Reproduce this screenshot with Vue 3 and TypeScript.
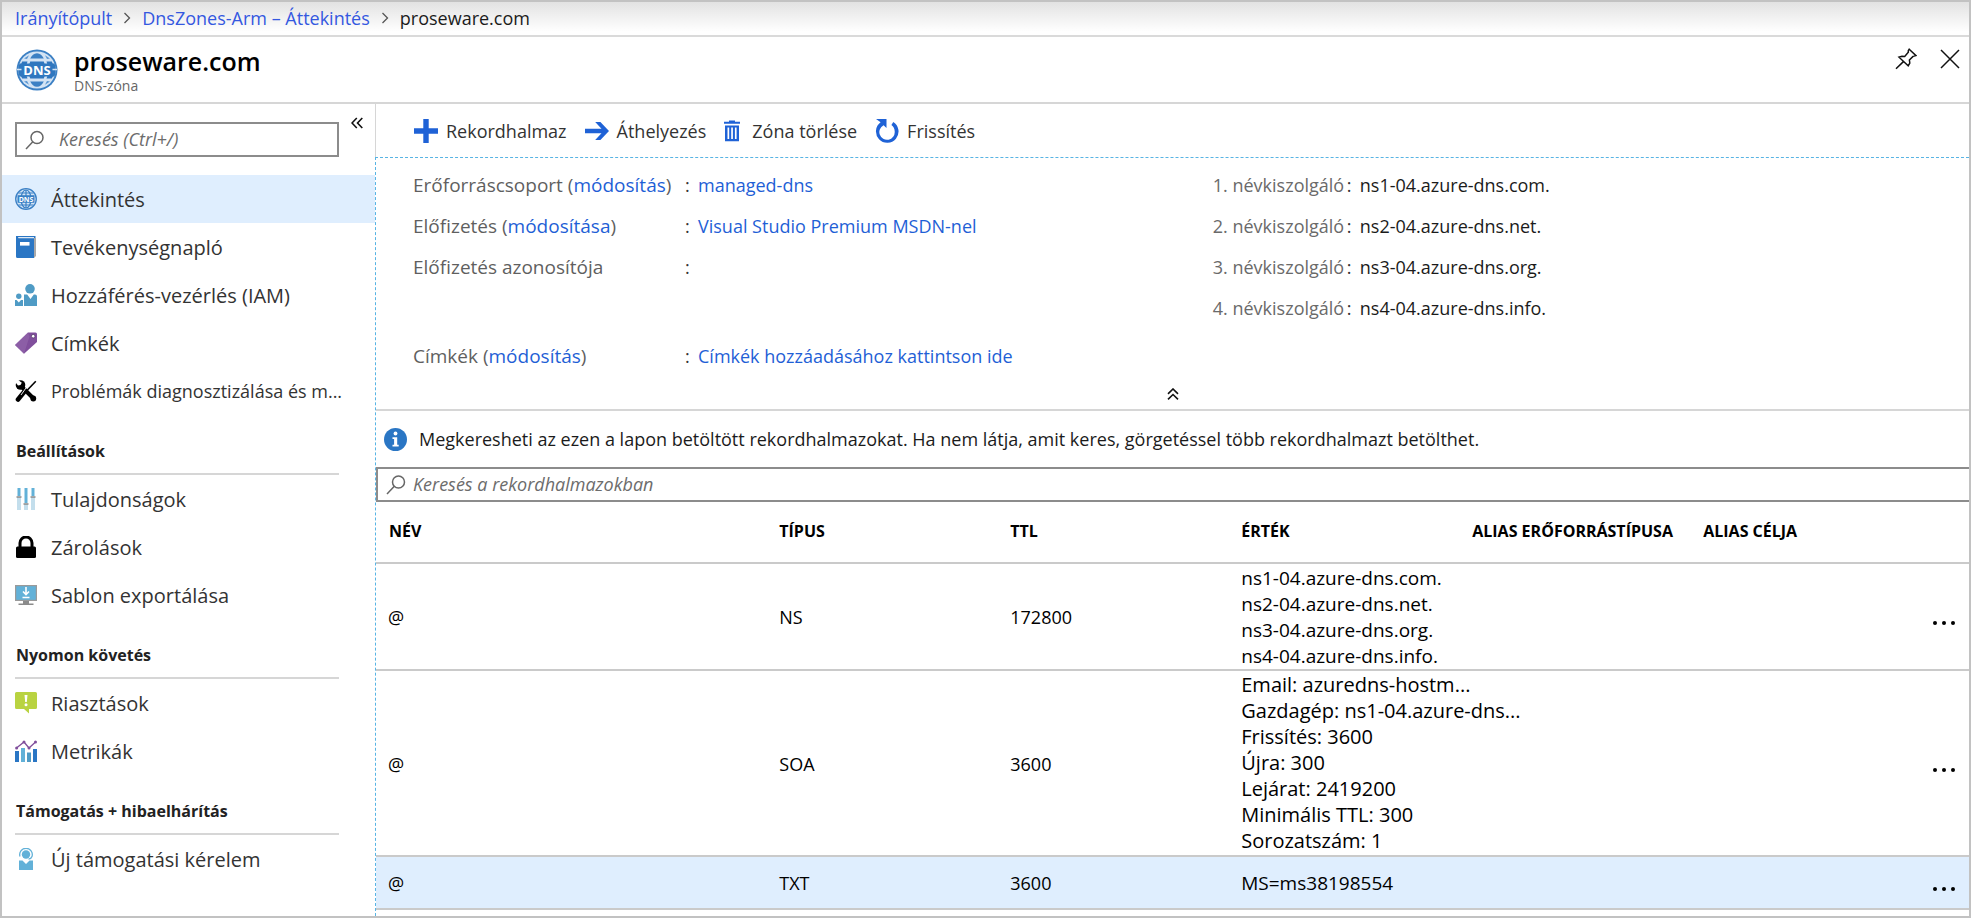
<script setup lang="ts">
import { ref } from 'vue'

interface MenuItem {
  label: string
  icon: string
  active?: boolean
  long?: boolean
}

interface MenuGroup {
  title?: string
  items: MenuItem[]
}

interface RecordSet {
  name: string
  type: string
  ttl: string
  values: string[]
  selected?: boolean
  detailed?: boolean
}

const menu: MenuGroup[] = [
  {
    items: [
      { label: 'Áttekintés', icon: 'dns', active: true },
      { label: 'Tevékenységnapló', icon: 'log' },
      { label: 'Hozzáférés-vezérlés (IAM)', icon: 'iam' },
      { label: 'Címkék', icon: 'tag' },
      { label: 'Problémák diagnosztizálása és m...', icon: 'tools', long: true },
    ],
  },
  {
    title: 'Beállítások',
    items: [
      { label: 'Tulajdonságok', icon: 'sliders' },
      { label: 'Zárolások', icon: 'lock' },
      { label: 'Sablon exportálása', icon: 'export' },
    ],
  },
  {
    title: 'Nyomon követés',
    items: [
      { label: 'Riasztások', icon: 'alert' },
      { label: 'Metrikák', icon: 'metrics' },
    ],
  },
  {
    title: 'Támogatás + hibaelhárítás',
    items: [{ label: 'Új támogatási kérelem', icon: 'support' }],
  },
]

const nameServers: string[] = [
  'ns1-04.azure-dns.com.',
  'ns2-04.azure-dns.net.',
  'ns3-04.azure-dns.org.',
  'ns4-04.azure-dns.info.',
]

const columns: string[] = ['NÉV', 'TÍPUS', 'TTL', 'ÉRTÉK', 'ALIAS ERŐFORRÁSTÍPUSA', 'ALIAS CÉLJA']

const records: RecordSet[] = [
  { name: '@', type: 'NS', ttl: '172800', values: nameServers },
  {
    name: '@',
    type: 'SOA',
    ttl: '3600',
    values: [
      'Email: azuredns-hostm...',
      'Gazdagép: ns1-04.azure-dns...',
      'Frissítés: 3600',
      'Újra: 300',
      'Lejárat: 2419200',
      'Minimális TTL: 300',
      'Sorozatszám: 1',
    ],
    detailed: true,
  },
  { name: '@', type: 'TXT', ttl: '3600', values: ['MS=ms38198554'], selected: true },
]

const menuFilter = ref('')
const recordFilter = ref('')
</script>

<template>
  <div class="portal">
    <nav class="crumbs" aria-label="Navigációs útvonal">
      <a href="#">Irányítópult</a>
      <svg class="crumb-sep" viewBox="0 0 8 12" aria-hidden="true"><path d="M1.5 1l5 5-5 5" /></svg>
      <a href="#">DnsZones-Arm – Áttekintés</a>
      <svg class="crumb-sep" viewBox="0 0 8 12" aria-hidden="true"><path d="M1.5 1l5 5-5 5" /></svg>
      <span>proseware.com</span>
    </nav>

    <header class="title-bar">
      <svg class="logo" viewBox="0 0 42 42" aria-hidden="true">
        <circle cx="21" cy="21" r="20.5" fill="#3c80c4" />
        <circle cx="21" cy="21" r="18.6" fill="#d3e3f4" />
        <path d="M21 4.200c-3 0-5.400 2.400-6.800 5.300h13.600C26.400 6.600 24 4.200 21 4.200zM21 37.800c-3 0-5.400-2.400-6.800-5.300h13.600c-1.400 2.900-3.800 5.300-6.800 5.300z" fill="#3c80c4" />
        <path d="M8 9.500l5-3.200-2 3.800zM34 9.500l-5-3.200 2 3.800zM8 32.500l5 3.200-2-3.800zM34 32.500l-5 3.200 2-3.800z" fill="#5a97d2" />
        <path d="M6.200 12.500h5.300l-1 3.300H4.800zM14.200 12.500h13.600l1 3.300H13.200zM35.800 12.500h-5.300l1 3.300h5.700zM6.200 29.500h5.300l-1-2.800H4.800zM14.200 29.500h13.600l1-2.800H13.200zM35.800 29.500h-5.300l1-2.800h5.700z" fill="#2f77bf" />
        <path d="M3.500 14.500h35a19 19 0 0 1 0 13h-35a19 19 0 0 1 0-13z" fill="#2f77bf" />
        <path d="M1 20.500h4.500M36.500 20.500H41" stroke="#d3e3f4" stroke-width="1.500" />
        <text x="21" y="26" text-anchor="middle" class="logo-text">DNS</text>
      </svg>
      <div class="title-text">
        <h1>proseware.com</h1>
        <p>DNS-zóna</p>
      </div>
      <div class="title-actions">
        <button type="button" aria-label="Rögzítés">
          <svg viewBox="0 0 22 22" class="line-icon"><path d="M14.200 1.200l6.600 6.300-1.800.6-1 .3-3.600 3.700.4 2.900-1.600 2.900L4 9.200l3-.9 2.700.2 3.600-4.200v-1.700zM8.400 13.600L1 20.800" /></svg>
        </button>
        <button type="button" aria-label="Bezárás">
          <svg viewBox="0 0 22 22" class="line-icon"><path d="M2 2l18 18M20 2L2 20" /></svg>
        </button>
      </div>
    </header>

    <div class="body">
      <aside class="sidebar">
        <div class="side-search-row">
          <label class="search side-search">
            <svg viewBox="0 0 20 20" class="magnifier" aria-hidden="true"><circle cx="12" cy="7.500" r="6" /><path d="M7.800 11.700L1 19" /></svg>
            <input v-model="menuFilter" type="text" placeholder="Keresés (Ctrl+/)" aria-label="Keresés a menüben" />
          </label>
          <button type="button" class="collapse" aria-label="Menü összecsukása">
            <svg viewBox="0 0 12 12"><path d="M5.800 1L1 6l4.800 5M11.300 1L6.500 6l4.800 5" /></svg>
          </button>
        </div>

        <section v-for="(group, g) in menu" :key="g">
          <h2 v-if="group.title">{{ group.title }}</h2>
          <ul>
            <li v-for="item in group.items" :key="item.label">
              <a href="#" :class="{ active: item.active, long: item.long }">
                <svg class="menu-icon" viewBox="0 0 22 22" aria-hidden="true">
                  <template v-if="item.icon === 'dns'">
                    <circle cx="11" cy="11" r="10.300" fill="#d3e3f4" stroke="#3a80c6" stroke-width="1.300" />
                    <ellipse cx="11" cy="11" rx="5" ry="9" fill="none" stroke="#3a80c6" stroke-width="1.200" />
                    <path d="M3.500 5h15M3.500 17h15M11 2v18" stroke="#3a80c6" stroke-width="1.200" />
                    <path d="M2.500 7.200h17v7.600h-17z" fill="#3a80c6" />
                    <text x="11" y="13.800" text-anchor="middle" class="mini-text">DNS</text>
                  </template>
                  <template v-else-if="item.icon === 'log'">
                    <path d="M2 0h18.500v20H19V2H2z" fill="#2a76c4" />
                    <path d="M19 2h2v18l-2 2z" fill="#a9a9a9" />
                    <path d="M1 0h2l1 2h15v20H2.500A1.500 1.500 0 0 1 1 20.500z" fill="#2a76c4" />
                    <path d="M3 1h16v1.200H3.500z" fill="#dfe9f4" />
                    <rect x="5" y="6" width="9.500" height="3.600" fill="#fff" />
                  </template>
                  <template v-else-if="item.icon === 'iam'">
                    <circle cx="15" cy="4.800" r="4.800" fill="#4f9bc5" />
                    <path d="M9 10.500h3.200L15.500 15l3.300-4.500H20a2 2 0 0 1 2 2V22H9z" fill="#4f9bc5" />
                    <circle cx="3.800" cy="12.300" r="2.700" fill="#4f9bc5" />
                    <path d="M0 16h1.600l2.200 2.400L6 16h2v6H0z" fill="#4f9bc5" />
                  </template>
                  <template v-else-if="item.icon === 'tag'">
                    <path d="M13 .5h7.500A1.500 1.500 0 0 1 22 2v8L9 21.800 0 13z" fill="#804f9c" />
                    <path d="M13 .5l1.500 4L9 21.800 0 13z" fill="#9569ae" opacity=".6" />
                    <circle cx="18.200" cy="4.200" r="1.800" fill="#fff" stroke="#55406a" stroke-width=".8" />
                  </template>
                  <template v-else-if="item.icon === 'tools'">
                    <path d="M3.500 3.500l15 15" stroke="#000" stroke-width="4" />
                    <circle cx="5.500" cy="5" r="4.800" fill="#000" />
                    <path d="M-1 .5L2.500-.5 6.800 2.800 5.500 5 3 5.500z" fill="#fff" />
                    <circle cx="18.300" cy="18.500" r="2.900" fill="#000" />
                    <path d="M20.800 1.200L11 11.500" stroke="#000" stroke-width="1.600" />
                    <path d="M9.500 11.500L3 19.500" stroke="#000" stroke-width="4.600" stroke-linecap="round" />
                    <path d="M12 6.500L6 15" stroke="#fff" stroke-width=".9" />
                  </template>
                  <template v-else-if="item.icon === 'sliders'">
                    <path d="M2 9h4v13H2zM9 16h4v6H9zM16 9h4v13h-4z" fill="#c3deec" />
                    <path d="M2.500 0h3v8h-3zM9.500 0h3v15h-3zM16.500 0h3v8h-3z" fill="#62b1d8" />
                    <path d="M1.500 9h5M8.500 16h5M15.500 9h5" stroke="#8b8b8b" stroke-width="1.400" />
                  </template>
                  <template v-else-if="item.icon === 'lock'">
                    <path d="M5 11V7a6 6 0 0 1 12 0v4" fill="none" stroke="#000" stroke-width="3" />
                    <rect x="1" y="10.500" width="20" height="11.500" rx="1.500" fill="#000" />
                  </template>
                  <template v-else-if="item.icon === 'export'">
                    <rect x=".6" y="1.600" width="20.800" height="14.800" fill="#62b1d8" stroke="#9a9a9a" stroke-width="1.200" />
                    <path d="M8 17h6v2.500h-6zM3.500 19.500h15V21h-15z" fill="#8b8b8b" />
                    <path d="M11 3v7M8 7.500l3 3 3-3M7.500 13.500h7" fill="none" stroke="#fff" stroke-width="1.600" />
                  </template>
                  <template v-else-if="item.icon === 'alert'">
                    <path d="M1.500 0h19A1.500 1.500 0 0 1 22 1.500v14a1.500 1.500 0 0 1-1.500 1.500H14v4.500L9 17H1.500A1.500 1.500 0 0 1 0 15.500v-14A1.500 1.500 0 0 1 1.500 0z" fill="#b9d341" />
                    <path d="M9.500 3h3l-.7 7h-1.600z" fill="#fff" /><circle cx="11" cy="12.800" r="1.500" fill="#fff" />
                  </template>
                  <template v-else-if="item.icon === 'metrics'">
                    <path d="M0 11h4v11H0zM18 9h4v13h-4z" fill="#2a76c4" />
                    <path d="M6 8h4v14H6z" fill="#62b1d8" /><path d="M12 12.500h4V22h-4z" fill="#4f9bc5" />
                    <path d="M1.500 8L9 2l5 6 6.500-6" fill="none" stroke="#804f9c" stroke-width="1.300" />
                    <circle cx="1.600" cy="8" r="1.500" fill="#804f9c" /><circle cx="9" cy="2" r="1.500" fill="#804f9c" />
                    <circle cx="14" cy="8" r="1.500" fill="#804f9c" /><circle cx="20.500" cy="2" r="1.500" fill="#804f9c" />
                  </template>
                  <template v-else>
                    <circle cx="11" cy="6.500" r="4.200" fill="#62b1d8" />
                    <path d="M5 8.500a6.300 6.300 0 1 1 12 0c-.5 1.500-1.500 2.500-3.500 2.700" fill="none" stroke="#62b1d8" stroke-width="1.300" />
                    <path d="M4 12.500h3.500L11 16l3.500-3.500H18V22H4z" fill="#62b1d8" />
                  </template>
                </svg>
                <span>{{ item.label }}</span>
              </a>
            </li>
          </ul>
        </section>
      </aside>

      <main class="main">
        <div class="toolbar">
          <button type="button">
            <svg viewBox="0 0 24 24" class="tool-icon"><path d="M9.300 0h5.400v9.300H24v5.400h-9.300V24H9.300v-9.300H0V9.300h9.300z" /></svg>
            <span>Rekordhalmaz</span>
          </button>
          <button type="button">
            <svg viewBox="0 0 24 24" class="tool-icon"><path d="M0 9.800h16.500L10.200 3h5.200l8.600 9-8.600 9h-5.200l6.300-6.800H0z" /></svg>
            <span>Áthelyezés</span>
          </button>
          <button type="button">
            <svg viewBox="0 0 16 24" class="tool-icon narrow"><path d="M5 1.500h6v1.300h5v2H0v-2h5zM1 6.500h14v15.700H1zm2.500 2v11.500h1.700V8.500zm3.700 0v11.500h1.700V8.500zm3.700 0v11.500h1.700V8.500z" fill-rule="evenodd" /></svg>
            <span>Zóna törlése</span>
          </button>
          <button type="button">
            <svg viewBox="0 0 24 24" class="tool-icon"><path d="M1 0h10.500v9L8.600 6.200A7.700 7.700 0 1 0 19.700 12.500c0-2.700-1.200-4.900-3.300-6.400l1.900-3.200A11.300 11.300 0 1 1 5.600 3.300z" /></svg>
            <span>Frissítés</span>
          </button>
        </div>

        <div class="content">
          <section class="essentials">
            <div class="facts">
              <dl class="facts-left">
                <dt>Erőforráscsoport (<a href="#">módosítás</a>)</dt>
                <dd><span class="colon">:</span><a href="#">managed-dns</a></dd>
                <dt>Előfizetés (<a href="#">módosítása</a>)</dt>
                <dd><span class="colon">:</span><a href="#">Visual Studio Premium MSDN-nel</a></dd>
                <dt>Előfizetés azonosítója</dt>
                <dd><span class="colon">:</span></dd>
                <dt class="spaced">Címkék (<a href="#">módosítás</a>)</dt>
                <dd class="spaced"><span class="colon">:</span><a href="#">Címkék hozzáadásához kattintson ide</a></dd>
              </dl>
              <dl class="facts-right">
                <template v-for="(server, i) in nameServers" :key="server">
                  <dt>{{ i + 1 }}. névkiszolgáló</dt>
                  <dd><span class="colon">:</span>{{ server }}</dd>
                </template>
              </dl>
            </div>
            <button type="button" class="fold" aria-label="Alapvető adatok összecsukása">
              <svg viewBox="0 0 12 12"><path d="M1 5.800L6 1l5 4.800M1 11.300l5-4.800 5 4.800" /></svg>
            </button>
          </section>

          <p class="notice">
            <svg viewBox="0 0 23 23" aria-hidden="true">
              <circle cx="11.500" cy="11.500" r="11.500" fill="#2a76c4" />
              <circle cx="11.500" cy="5.500" r="1.900" fill="#fff" />
              <path d="M8.500 9.200h4.700v7.600h1.500v1.700H8.500v-1.700h1.600v-5.900H8.500z" fill="#fff" />
            </svg>
            <span>Megkeresheti az ezen a lapon betöltött rekordhalmazokat. Ha nem látja, amit keres, görgetéssel több rekordhalmazt betölthet.</span>
          </p>

          <label class="search record-search">
            <svg viewBox="0 0 20 20" class="magnifier" aria-hidden="true"><circle cx="12.500" cy="7" r="6" /><path d="M8.300 11.200L1 19" /></svg>
            <input v-model="recordFilter" type="text" placeholder="Keresés a rekordhalmazokban" aria-label="Keresés a rekordhalmazokban" />
          </label>

          <table class="records">
            <colgroup>
              <col class="c-name" /><col class="c-std" /><col class="c-std" /><col class="c-std" /><col class="c-std" /><col /><col class="c-more" />
            </colgroup>
            <thead>
              <tr>
                <th v-for="column in columns" :key="column" scope="col">{{ column }}</th>
                <td></td>
              </tr>
            </thead>
            <tbody>
              <tr v-for="record in records" :key="record.type" :class="{ selected: record.selected, detailed: record.detailed }">
                <td class="name">{{ record.name }}</td>
                <td>{{ record.type }}</td>
                <td>{{ record.ttl }}</td>
                <td class="values"><div v-for="value in record.values" :key="value">{{ value }}</div></td>
                <td></td>
                <td></td>
                <td class="more">
                  <button type="button" aria-label="További műveletek">
                    <svg viewBox="0 0 24 24"><circle cx="3" cy="18" r="2" /><circle cx="12" cy="18" r="2" /><circle cx="21" cy="18" r="2" /></svg>
                  </button>
                </td>
              </tr>
            </tbody>
          </table>
        </div>
      </main>
    </div>
  </div>
</template>

<style>
body {
  margin: 0;
}
</style>

<style scoped>
.portal {
  box-sizing: border-box;
  min-height: 100vh;
  display: flex;
  flex-direction: column;
  border: 2px solid #c2c2c2;
  background: #fff;
  color: #1b1b1b;
  font-family: "Open Sans", "Noto Sans", sans-serif;
  font-size: 18px;
}

a {
  color: #1f5fd6;
  text-decoration: none;
}

button {
  display: flex;
  align-items: center;
  padding: 0;
  border: 0;
  background: none;
  color: inherit;
  font: inherit;
}

h1,
h2,
p,
ul,
dl,
dd {
  margin: 0;
  padding: 0;
}

ul {
  list-style: none;
}

.crumbs {
  display: flex;
  align-items: center;
  gap: 11px;
  height: 31px;
  padding: 0 0 2px 13px;
  border-bottom: 2px solid #dadada;
  background: linear-gradient(#e2e2e2, #fff 90%);
}

.crumbs a {
  color: #3458e0;
}

.crumb-sep {
  width: 8px;
  height: 12px;
  fill: none;
  stroke: #555;
  stroke-width: 1.3;
}

.title-bar {
  display: flex;
  align-items: center;
  height: 65px;
  padding: 0 8px 0 14px;
  border-bottom: 2px solid #d6d6d6;
}

.logo {
  width: 42px;
  height: 42px;
  margin-right: 16px;
}

.logo-text {
  fill: #fff;
  font-size: 13px;
  font-weight: 700;
}

.mini-text {
  fill: #fff;
  font-size: 7px;
  font-weight: 700;
}

.title-text {
  flex: 1;
}

.title-text h1 {
  color: #000;
  font-size: 25px;
  font-weight: 600;
  line-height: 32px;
}

.title-text p {
  color: #666;
  font-size: 14px;
  line-height: 18px;
}

.title-actions {
  display: flex;
  gap: 22px;
  align-self: flex-start;
  padding-top: 11px;
}

.line-icon {
  width: 22px;
  height: 22px;
  fill: none;
  stroke: #111;
  stroke-width: 1.5;
}

.body {
  flex: 1;
  display: grid;
  grid-template-columns: 373px minmax(0, 1fr);
}

.side-search-row {
  display: flex;
  align-items: flex-start;
  gap: 12px;
  padding: 13px 12px 18px 13px;
}

.search {
  box-sizing: border-box;
  display: flex;
  align-items: center;
  height: 35px;
  border: 2px solid #8c8c8c;
  background: #fff;
}

.search input {
  flex: 1;
  min-width: 0;
  padding: 0 0 2px;
  border: 0;
  outline: 0;
  background: none;
  font: inherit;
}

.search input::placeholder {
  color: #6c6c6c;
  font-style: italic;
  opacity: 1;
}

.magnifier {
  flex: none;
  width: 20px;
  height: 20px;
  fill: none;
  stroke: #666;
  stroke-width: 1.5;
}

.side-search {
  flex: 1;
  gap: 14px;
  margin-top: 5px;
  padding: 0 8px;
}

.collapse svg,
.fold svg {
  display: block;
  width: 12px;
  height: 12px;
  fill: none;
  stroke: #111;
  stroke-width: 1.6;
}

.sidebar h2 {
  margin: 0 36px 0 13px;
  padding: 24px 0 10px 1px;
  border-bottom: 2px solid #d6d6d6;
  color: #222;
  font-size: 16px;
  font-weight: 700;
  line-height: 24px;
}

.sidebar li a {
  display: flex;
  align-items: center;
  gap: 14px;
  height: 48px;
  padding-left: 13px;
  color: #333;
  font-size: 20px;
  white-space: nowrap;
}

.sidebar li a.active {
  background: #dfeefe;
}

.sidebar li a.long {
  font-size: 18px;
}

.menu-icon {
  flex: none;
  width: 22px;
  height: 22px;
}

.main {
  display: flex;
  flex-direction: column;
}

.toolbar {
  display: flex;
  align-items: center;
  height: 53px;
  padding-left: 38px;
  border-left: 1px solid #d6d6d6;
  gap: 18px;
  color: #333;
}

.toolbar button {
  gap: 8px;
}

.tool-icon {
  width: 24px;
  height: 24px;
  fill: #1f62d6;
}

.tool-icon.narrow {
  width: 16px;
  margin-right: 4px;
}

.content {
  flex: 1;
  border-top: 1px dashed #58b4e4;
  border-left: 1px dashed #58b4e4;
}

.essentials {
  border-bottom: 2px solid #d6d6d6;
}

.facts {
  display: flex;
  padding: 7px 0 1px 37px;
}

.facts dl {
  display: grid;
  grid-template-rows: 41px 41px 41px auto;
  align-items: center;
  align-content: start;
}

.facts-left {
  flex: 0 0 51.4%;
  grid-template-columns: 272px 1fr;
  color: #5f5f5f;
}

.facts-left dt {
  font-size: 19px;
}

.facts dt,
.facts dd {
  line-height: 41px;
}

.facts-left .spaced {
  margin-top: 48px;
}

.facts-right {
  flex: 1;
  grid-template-columns: 134px 1fr;
}

.facts-right dt {
  color: #6a6a6a;
}

.colon {
  display: inline-block;
  width: 13px;
  color: #333;
}

.fold {
  justify-content: center;
  width: 100%;
  height: 31px;
}

.notice {
  display: flex;
  align-items: center;
  gap: 12px;
  height: 56px;
  padding-left: 8px;
  white-space: nowrap;
}

.notice svg {
  width: 23px;
  height: 23px;
}

.record-search {
  gap: 7px;
  padding-left: 8px;
  border-right: 0;
}

.records {
  width: 100%;
  border-collapse: separate;
  border-spacing: 0;
  table-layout: fixed;
  color: #000;
}

.c-name {
  width: 24.5%;
}

.c-std {
  width: 14.5%;
}

.c-more {
  width: 49px;
}

.records th,
.records td {
  padding: 1px 0 0 13px;
  border-bottom: 2px solid #cacaca;
  text-align: left;
  white-space: nowrap;
}

.records thead tr {
  height: 62px;
}

.records th {
  padding-top: 0;
  padding-bottom: 2px;
  font-size: 16px;
  font-weight: 700;
}

.records tbody td {
  font-weight: 500;
  line-height: 26px;
}

.records tbody tr {
  height: 53px;
}

.records tbody .name {
  padding-left: 12px;
  font-weight: 400;
}

.records tbody .values {
  font-size: 19px;
}

.records .detailed .values {
  padding-bottom: 1px;
  font-size: 20px;
}

.records .selected {
  background: #dfeefe;
}

.records .more {
  padding-left: 12px;
}

.more svg {
  display: block;
  width: 24px;
  height: 24px;
}
</style>
